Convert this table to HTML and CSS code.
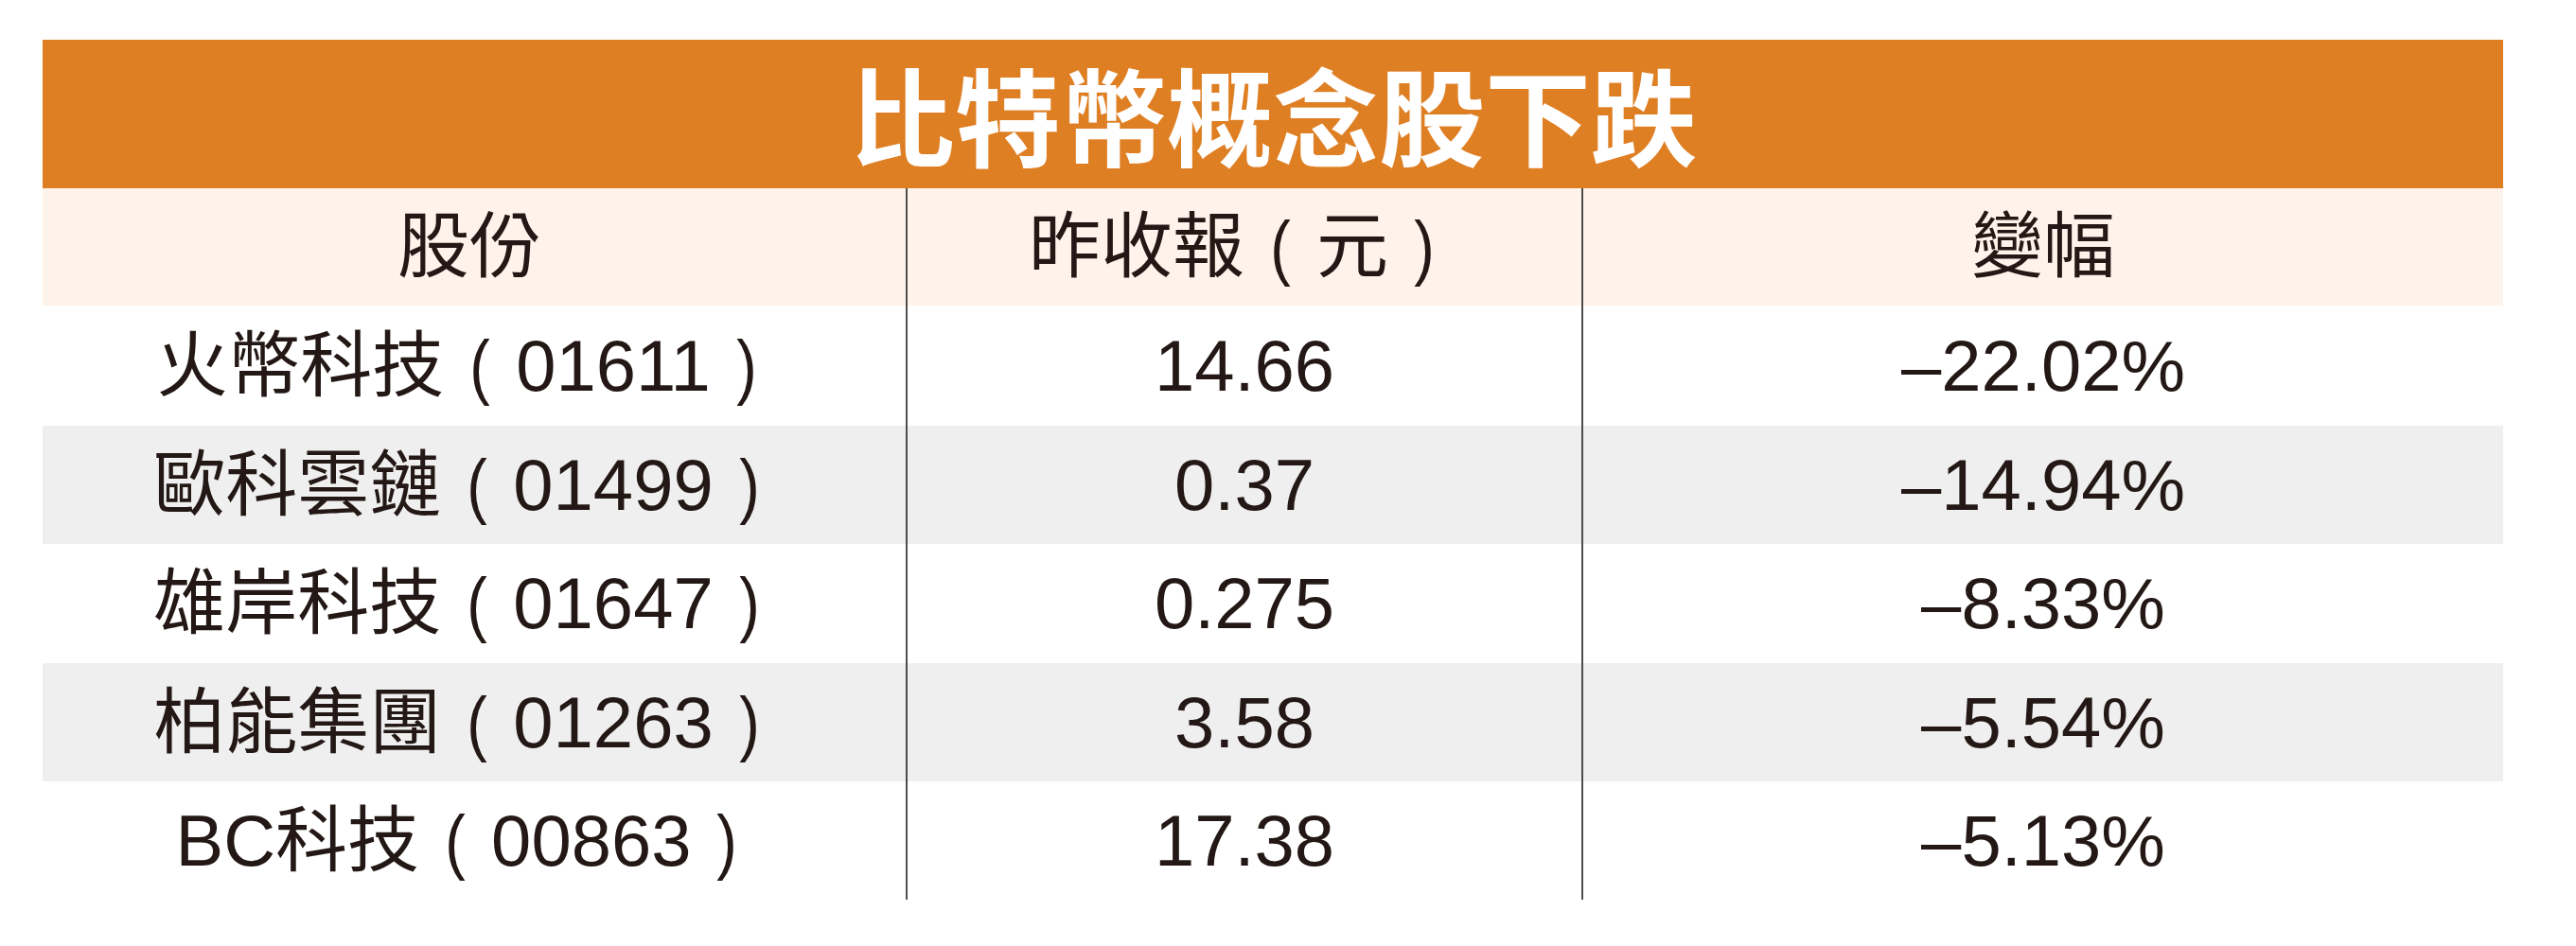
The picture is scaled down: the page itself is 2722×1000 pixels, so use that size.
FILE: index.html
```html
<!DOCTYPE html>
<html lang="zh-Hant">
<head>
<meta charset="utf-8">
<title>比特幣概念股下跌</title>
<link rel="stylesheet" href="styles.css">
</head>
<body>
<div class="board">
  <div class="title">比特幣概念股下跌</div>
  <div class="grid">
    <div class="cell head c1">股份</div>
    <div class="cell head c2">昨收報<span class="p">(</span>元<span class="p">)</span></div>
    <div class="cell head c3">變幅</div>

    <div class="cell first c1">火幣科技<span class="p">(</span>01611<span class="p">)</span></div>
    <div class="cell first c2">14.66</div>
    <div class="cell first c3">–22.02%</div>

    <div class="cell alt c1">歐科雲鏈<span class="p">(</span>01499<span class="p">)</span></div>
    <div class="cell alt c2">0.37</div>
    <div class="cell alt c3">–14.94%</div>

    <div class="cell c1">雄岸科技<span class="p">(</span>01647<span class="p">)</span></div>
    <div class="cell c2">0.275</div>
    <div class="cell c3">–8.33%</div>

    <div class="cell alt c1">柏能集團<span class="p">(</span>01263<span class="p">)</span></div>
    <div class="cell alt c2">3.58</div>
    <div class="cell alt c3">–5.54%</div>

    <div class="cell c1">BC科技<span class="p">(</span>00863<span class="p">)</span></div>
    <div class="cell c2">17.38</div>
    <div class="cell c3">–5.13%</div>
  </div>
</div>
</body>
</html>
```
FILE: styles.css
```css
html, body {
  margin: 0;
  padding: 0;
  background: #ffffff;
}
body {
  padding: 42px 0 0 45px;
  font-family: "Liberation Sans", "Noto Sans CJK TC", sans-serif;
  color: #231815;
}
.board {
  width: 2600px;
}
.title {
  height: 157px;
  background: #df7f24;
  color: #ffffff;
  font-family: "Noto Sans CJK TC", sans-serif;
  font-weight: 700;
  font-size: 112px;
  display: flex;
  align-items: center;
  justify-content: center;
  line-height: 1;
  padding-bottom: 4px;
  box-sizing: border-box;
}
.grid {
  display: grid;
  grid-template-columns: 912px 714px 974px;
  grid-template-rows: 124px 127px 125px 126px 125px 125px;
}
.cell {
  display: flex;
  align-items: center;
  justify-content: center;
  font-size: 76px;
  line-height: 1;
  white-space: nowrap;
}
.c2, .c3 {
  border-left: 2px solid #4d4d4d;
}
.head {
  background: #fdf3ea;
  font-family: "Liberation Sans", "Noto Sans CJK TC", sans-serif;
}
.alt {
  background: #efefef;
}
.c1 {
  padding-right: 10px;
}
.p {
  display: inline-block;
  width: 1em;
  text-align: center;
  font-family: "Liberation Sans", sans-serif;
  transform: scaleX(0.85);
}
```
